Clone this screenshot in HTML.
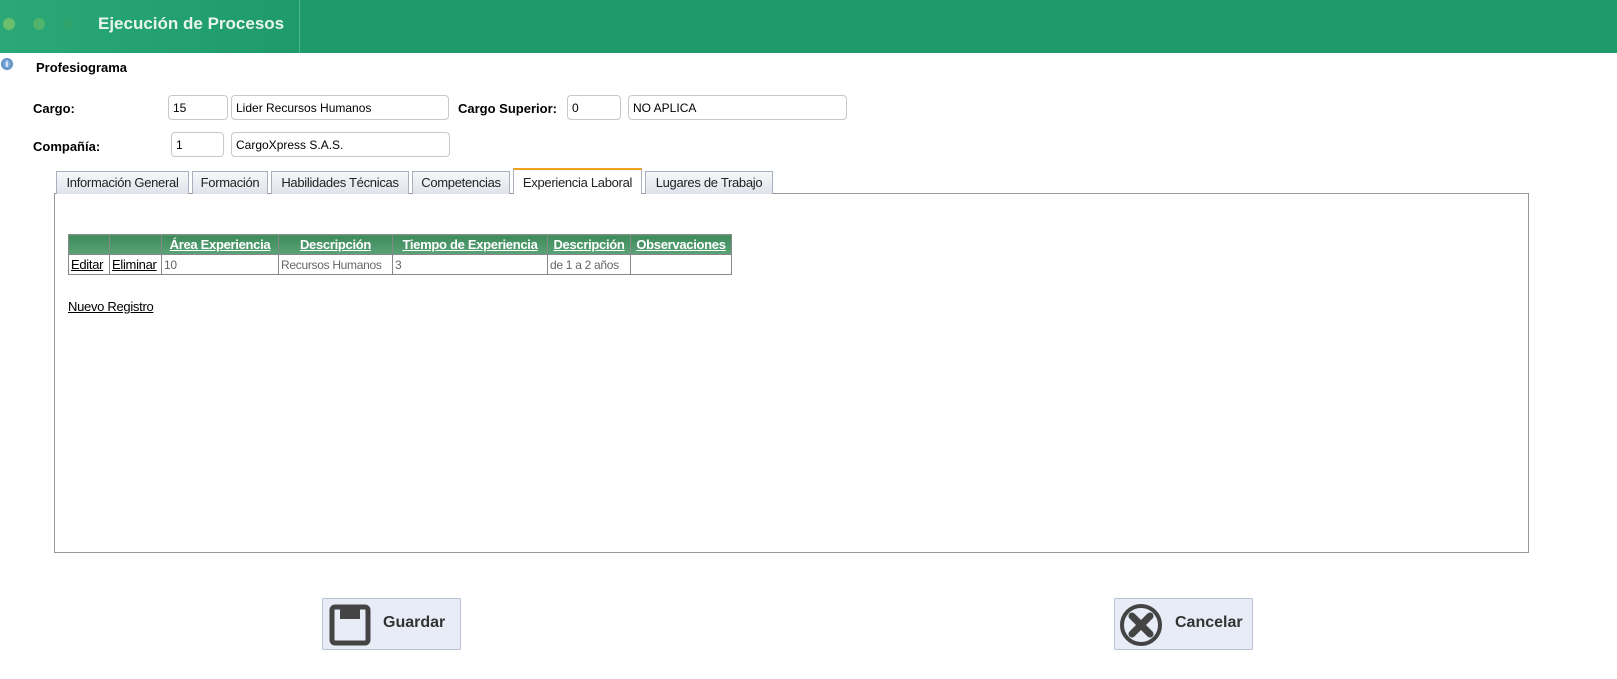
<!DOCTYPE html><html><head><meta charset="utf-8"><style>
*{box-sizing:border-box}body{margin:0;width:1617px;height:679px;background:#fff;font-family:"Liberation Sans",sans-serif;position:relative;overflow:hidden;color:#000}
.a{position:absolute}
.hdr{left:0;top:0;width:1617px;height:53px;background:linear-gradient(90deg,#2aa877 0,#1f9b6b 300px,#1f9b6b)}
.dot{width:12px;height:12px;border-radius:6px;top:18px}
.lbl{font-weight:bold;font-size:13px}
.in{border:1px solid #c8c8c8;border-radius:4px;height:25px;font-size:12px;padding:5px 4px;background:#fff}
.tab{top:171px;height:23px;border:1px solid #a9b0bd;border-bottom:none;background:linear-gradient(#f6f7fa,#dfe3ea);font-size:13px;padding:3px 0 0;text-align:center;letter-spacing:-.3px;color:#222}
table{border-collapse:collapse;font-size:12px;letter-spacing:-.3px}
td,th{border:1px solid #888;padding:0 2px;height:20px;white-space:nowrap}
th{background:linear-gradient(#3d8a5a,#5aa478);color:#fff;text-decoration:underline;font-size:13px;border-color:#888}
td{color:#666}td a{color:#000;text-decoration:underline;font-size:13px}
.btn{top:598px;width:139px;height:52px;border:1px solid #b9c2d3;background:#e7ecf7;font-weight:bold;font-size:16px;color:#333;border-radius:2px}
</style></head><body>
<div class="a hdr"></div>
<div class="a dot" style="left:3px;background:#6cc06c"></div>
<div class="a dot" style="left:33px;background:#4fb46a"></div>
<div class="a dot" style="left:62px;background:#2fa56b"></div>
<div class="a" style="left:299px;top:0;width:1px;height:53px;background:#4cb88a"></div>
<div class="a" style="left:98px;top:14px;color:#e8f5ee;font-weight:bold;font-size:17px">Ejecución de Procesos</div>
<div class="a" style="left:1px;top:58px;width:12px;height:12px;border-radius:6px;background:radial-gradient(#9ec3ea,#3a6fb0);color:#fff;font-size:9px;font-weight:bold;text-align:center;line-height:12px">i</div>
<div class="a lbl" style="left:36px;top:60px">Profesiograma</div>
<div class="a lbl" style="left:33px;top:101px">Cargo:</div>
<div class="a in" style="left:168px;top:95px;width:60px">15</div>
<div class="a in" style="left:231px;top:95px;width:218px">Lider Recursos Humanos</div>
<div class="a lbl" style="left:458px;top:101px">Cargo Superior:</div>
<div class="a in" style="left:567px;top:95px;width:54px">0</div>
<div class="a in" style="left:628px;top:95px;width:219px">NO APLICA</div>
<div class="a lbl" style="left:33px;top:139px">Compañía:</div>
<div class="a in" style="left:171px;top:132px;width:53px">1</div>
<div class="a in" style="left:231px;top:132px;width:219px">CargoXpress S.A.S.</div>
<div class="a" style="left:54px;top:193px;width:1475px;height:360px;border:1px solid #999"></div>
<div class="a tab" style="left:56px;width:133px">Información General</div>
<div class="a tab" style="left:192px;width:76px">Formación</div>
<div class="a tab" style="left:271px;width:138px">Habilidades Técnicas</div>
<div class="a tab" style="left:412px;width:98px">Competencias</div>
<div class="a tab" style="left:513px;width:129px;top:168px;height:26px;background:#fff;border-top:2px solid #f0a020;padding-top:5px">Experiencia Laboral</div>
<div class="a tab" style="left:645px;width:128px">Lugares de Trabajo</div>
<table class="a" style="left:68px;top:234px">
<tr><th style="width:41px"></th><th style="width:52px"></th><th style="width:117px">Área Experiencia</th><th style="width:114px">Descripción</th><th style="width:155px">Tiempo de Experiencia</th><th style="width:83px">Descripción</th><th style="width:101px">Observaciones</th></tr>
<tr><td><a>Editar</a></td><td><a>Eliminar</a></td><td>10</td><td>Recursos Humanos</td><td>3</td><td>de 1 a 2 años</td><td></td></tr>
</table>
<div class="a" style="left:68px;top:299px;font-size:13px;text-decoration:underline;letter-spacing:-.3px">Nuevo Registro</div>
<div class="a btn" style="left:322px"><svg class="a" style="left:6px;top:5px" width="42" height="42" viewBox="0 0 42 42"><rect x="3" y="3" width="36" height="36" rx="3" fill="none" stroke="#444" stroke-width="5"/><rect x="11" y="3" width="20" height="12" fill="#444"/></svg><span class="a" style="left:60px;top:15px">Guardar</span></div>
<div class="a btn" style="left:1114px"><svg class="a" style="left:3px;top:3px" width="46" height="46" viewBox="0 0 46 46"><circle cx="23" cy="23" r="19" fill="none" stroke="#444" stroke-width="4"/><path d="M14 14L32 32M32 14L14 32" stroke="#444" stroke-width="7" stroke-linecap="round"/></svg><span class="a" style="left:60px;top:15px">Cancelar</span></div>
</body></html>
